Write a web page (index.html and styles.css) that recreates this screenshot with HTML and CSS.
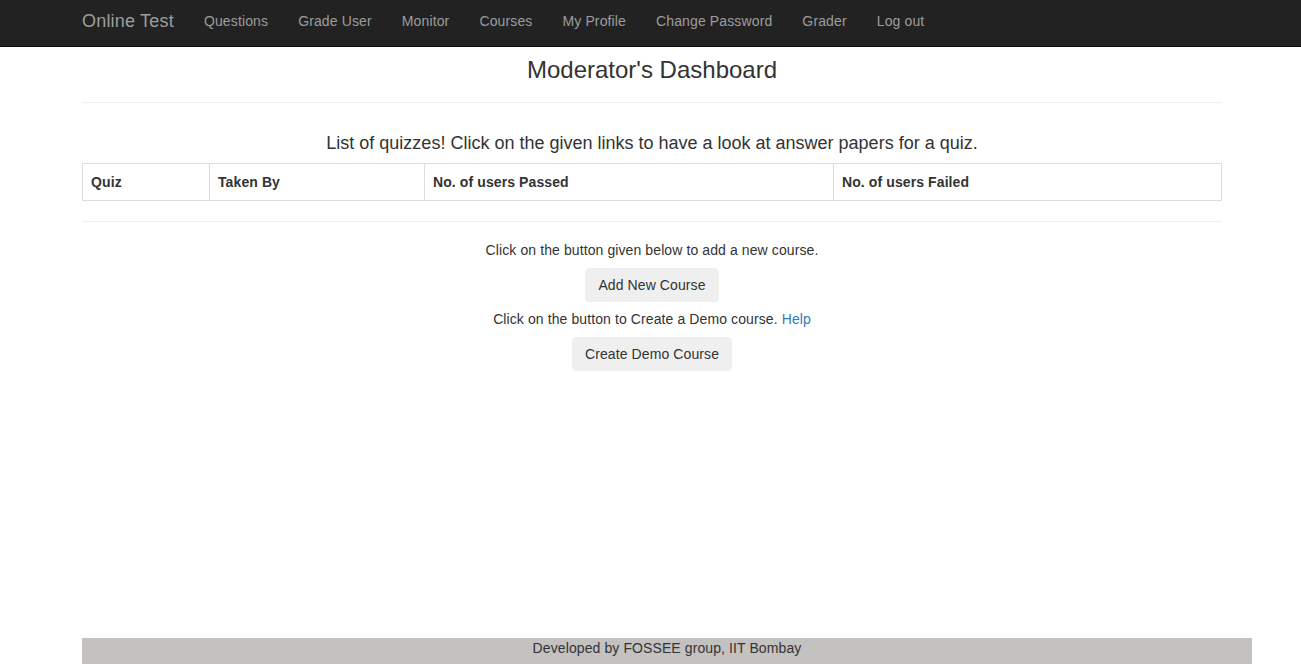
FILE: index.html
```html
<!DOCTYPE html>
<html lang="en">
<head>
<meta charset="utf-8">
<title>Moderator's Dashboard</title>
<link rel="stylesheet" href="styles.css">
</head>
<body>
<nav class="navbar">
  <div class="navbar-inner">
    <a class="brand" href="#">Online Test</a>
    <ul class="nav">
      <li><a href="#">Questions</a></li>
      <li><a href="#">Grade User</a></li>
      <li><a href="#">Monitor</a></li>
      <li><a href="#">Courses</a></li>
      <li><a href="#">My Profile</a></li>
      <li><a href="#">Change Password</a></li>
      <li><a href="#">Grader</a></li>
      <li><a href="#">Log out</a></li>
    </ul>
  </div>
</nav>
<main class="container">
  <h3 class="title">Moderator's Dashboard</h3>
  <hr class="rule rule-top">
  <h4 class="subtitle">List of quizzes! Click on the given links to have a look at answer papers for a quiz.</h4>
  <table class="table">
    <thead>
      <tr>
        <th class="col-quiz">Quiz</th>
        <th class="col-taken">Taken By</th>
        <th class="col-passed">No. of users Passed</th>
        <th class="col-failed">No. of users Failed</th>
      </tr>
    </thead>
  </table>
  <hr class="rule">
  <div class="actions">
    <p class="note">Click on the button given below to add a new course.</p>
    <a class="btn" href="#">Add New Course</a>
    <p class="note note-second">Click on the button to Create a Demo course. <a class="link" href="#">Help</a></p>
    <a class="btn" href="#">Create Demo Course</a>
  </div>
</main>
<footer class="footer">Developed by FOSSEE group, IIT Bombay</footer>
</body>
</html>
```
FILE: styles.css
```css
* { box-sizing: border-box; }
html, body { margin: 0; padding: 0; }
body {
  font-family: "Liberation Sans", Arial, Helvetica, sans-serif;
  font-size: 14px;
  line-height: 20px;
  letter-spacing: 0.1px;
  color: #333;
  background: #fff;
  min-height: 100vh;
  display: flex;
  flex-direction: column;
}
a { text-decoration: none; }

.navbar {
  background: #222;
  border-bottom: 1px solid #080808;
  height: 47px;
}
.navbar-inner {
  display: flex;
  align-items: flex-start;
  margin-left: 67px;
}
.brand {
  display: block;
  font-size: 18px;
  line-height: 20px;
  letter-spacing: 0.2px;
  padding: 11px 15px;
  color: #9d9d9d;
}
.nav {
  display: flex;
  list-style: none;
  margin: 0;
  padding: 0;
}
.nav a {
  display: block;
  padding: 11px 15px 12px;
  line-height: 20px;
  letter-spacing: 0.13px;
  color: #9d9d9d;
}

.container {
  width: 1140px;
  margin-left: 82px;
  flex: 1 0 auto;
}
.title {
  font-size: 24px;
  font-weight: 500;
  line-height: 26px;
  letter-spacing: 0;
  text-align: center;
  margin: 10px 0 0;
}
.rule {
  border: 0;
  border-top: 1px solid #eee;
  margin: 20px 0;
  height: 0;
}
.rule-top { margin-top: 19px; }
.subtitle {
  font-size: 18px;
  font-weight: 500;
  line-height: 20px;
  letter-spacing: 0;
  text-align: center;
  margin: 30px 0 10px;
}
.table {
  width: 100%;
  border-collapse: collapse;
  border: 1px solid #ddd;
  margin-bottom: 20px;
}
.table th {
  text-align: left;
  font-weight: bold;
  padding: 8px;
  line-height: 20px;
  border: 1px solid #ddd;
}
.col-quiz { width: 127px; }
.col-taken { width: 215px; }
.col-passed { width: 409px; }

.actions {
  display: flex;
  flex-direction: column;
  align-items: center;
}
.note {
  margin: 0 0 8px;
  margin-top: -2px;
}
.note-second { margin-top: 7px; }
.link { color: #337ab7; }
.btn {
  display: inline-block;
  padding: 6px 12px;
  line-height: 20px;
  font-size: 14px;
  color: #333;
  background: #efefef;
  border: 1px solid #efefef;
  border-radius: 4px;
}

.footer {
  width: 1170px;
  margin-left: 82px;
  height: 26px;
  line-height: 20px;
  text-align: center;
  background: #c4c1c1;
  color: #333;
}
```
